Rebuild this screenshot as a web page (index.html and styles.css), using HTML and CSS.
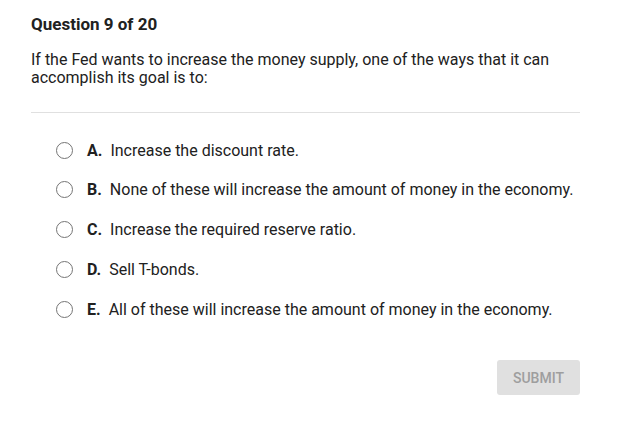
FILE: index.html
```html
<!DOCTYPE html>
<html lang="en">
<head>
    <meta charset="UTF-8">
    <title>Question 9 of 20</title>
    <link rel="stylesheet" href="styles.css">
</head>
<body>
    <div class="quiz">
        <h2 class="quiz-title">Question 9 of 20</h2>
        <p class="quiz-question">If the Fed wants to increase the money supply, one of the ways that it can accomplish its goal is to:</p>

        <ul class="options">
            <li class="option"><span class="radio"></span><b>A.</b> Increase the discount rate.</li>
            <li class="option"><span class="radio"></span><b>B.</b> None of these will increase the amount of money in the economy.</li>
            <li class="option"><span class="radio"></span><b>C.</b> Increase the required reserve ratio.</li>
            <li class="option"><span class="radio"></span><b>D.</b> Sell T-bonds.</li>
            <li class="option"><span class="radio"></span><b>E.</b> All of these will increase the amount of money in the economy.</li>
        </ul>

        <div class="actions">
            <button class="btn-submit" disabled>SUBMIT</button>
        </div>
    </div>
</body>
</html>
```

FILE: styles.css
```css
body {
    font-family: Roboto, 'Liberation Sans', sans-serif;
    background: #fff;
    margin: 0;
    color: #212121;
}
.quiz {
    width: 549px;
    padding: 14px 0 0 31px;
}
.quiz-title {
    font-size: 17px;
    font-weight: 700;
    margin: 0;
    line-height: 20px;
}
.quiz-question {
    font-size: 16px;
    line-height: 18px;
    margin: 17px 0 0;
    padding-bottom: 25px;
    border-bottom: 1px solid #e0e0e0;
}
.options {
    list-style: none;
    margin: 0;
    padding: 27px 0 0 24px;
}
.option {
    display: flex;
    align-items: center;
    height: 20px;
    margin-bottom: 19.8px;
    font-size: 16px;
}
.option b {
    font-weight: 700;
    margin-right: 8px;
}
.radio {
    width: 15px;
    height: 15px;
    border: 1.5px solid #757575;
    border-radius: 50%;
    margin-left: 1px;
    margin-right: 14px;
    flex-shrink: 0;
}
.actions {
    display: flex;
    justify-content: flex-end;
    margin-top: 41px;
}
.btn-submit {
    width: 83px;
    height: 35px;
    border: none;
    border-radius: 3px;
    background: #e0e0e0;
    color: #9e9e9e;
    font-family: inherit;
    font-size: 14px;
    font-weight: 500;
}
```
